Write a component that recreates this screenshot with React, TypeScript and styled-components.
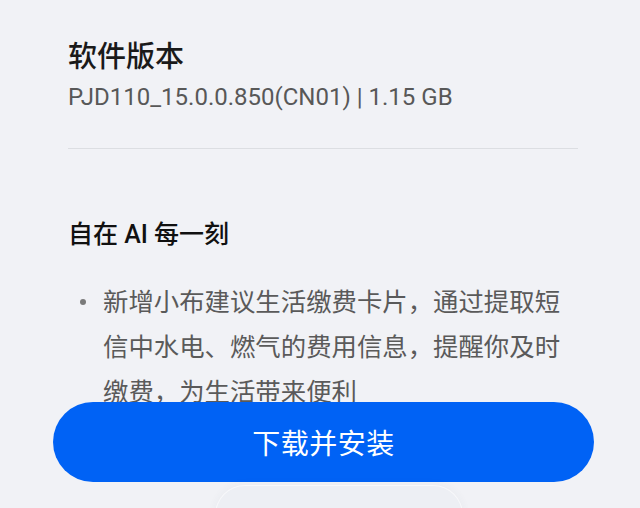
import React from "react";
import styled, { createGlobalStyle } from "styled-components";

const GlobalStyle = createGlobalStyle`
  html, body {
    margin: 0;
    padding: 0;
    background: #f1f2f6;
    overflow: hidden;
  }
  body {
    font-family: Roboto, "Noto Sans CJK SC", sans-serif;
    -webkit-font-smoothing: antialiased;
  }
`;

const Screen = styled.div`
  width: 640px;
  height: 508px;
  display: flex;
  flex-direction: column;
  background: #f1f2f6;
  overflow: hidden;
`;

const ScrollArea = styled.div`
  height: 402px;
  flex: none;
  overflow: hidden;
  padding: 34px 62px 0 68px;
  box-sizing: border-box;
`;

const Title = styled.h1`
  margin: 0;
  font-family: "Noto Sans CJK SC", sans-serif;
  font-size: 29px;
  line-height: 40px;
  font-weight: 500;
  color: #1a1a1a;
`;

const Version = styled.div`
  margin-top: 7px;
  font-family: Roboto, "Noto Sans CJK SC", sans-serif;
  font-size: 24px;
  line-height: 32px;
  color: #585858;
`;

const Divider = styled.hr`
  margin: 35px 0 0 0;
  border: none;
  height: 1px;
  background: #dcdee2;
`;

const SectionHeading = styled.h2`
  margin: 69px 0 0 0;
  font-family: Roboto, "Noto Sans CJK SC", sans-serif;
  font-size: 25px;
  line-height: 34px;
  font-weight: 500;
  color: #111;
`;

const List = styled.ul`
  list-style: none;
  margin: 26px 0 0 0;
  padding: 0;
`;

const Item = styled.li`
  display: flex;
  align-items: flex-start;
`;

const Marker = styled.span`
  flex: none;
  width: 35px;
  height: 45px;
  display: flex;
  align-items: center;
`;

const Dot = styled.span`
  width: 6px;
  height: 6px;
  margin-left: 12px;
  margin-top: 3px;
  border-radius: 50%;
  background: #7a7a7a;
`;

const ItemText = styled.span`
  font-family: "Noto Sans CJK SC", sans-serif;
  font-size: 25.4px;
  line-height: 45px;
  color: #5a5a5a;
`;

const Footer = styled.div`
  display: flex;
  flex-direction: column;
  align-items: center;
`;

const PrimaryButton = styled.button`
  align-self: stretch;
  margin: 0 46px 0 53px;
  height: 80px;
  border: none;
  border-radius: 40px;
  background: #0062f5;
  color: #fff;
  font-family: "Noto Sans CJK SC", sans-serif;
  font-size: 28px;
  font-weight: 400;
  letter-spacing: 0.5px;
  cursor: pointer;
`;

const GhostPill = styled.div`
  margin-top: 3px;
  margin-left: 38px;
  width: 248px;
  height: 60px;
  border-radius: 30px;
  background: #edeff4;
  border: 1px solid rgba(255, 255, 255, 0.6);
  box-shadow: 0 0 10px rgba(60, 70, 90, 0.05);
  box-sizing: border-box;
`;

export default function App() {
  return (
    <>
      <GlobalStyle />
      <Screen>
        <ScrollArea>
          <Title>软件版本</Title>
          <Version>PJD110_15.0.0.850(CN01) | 1.15 GB</Version>
          <Divider />
          <SectionHeading>自在 AI 每一刻</SectionHeading>
          <List>
            <Item>
              <Marker>
                <Dot />
              </Marker>
              <ItemText>
                新增小布建议生活缴费卡片，通过提取短信中水电、燃气的费用信息，提醒你及时缴费，为生活带来便利
              </ItemText>
            </Item>
          </List>
        </ScrollArea>
        <Footer>
          <PrimaryButton>下载并安装</PrimaryButton>
          <GhostPill />
        </Footer>
      </Screen>
    </>
  );
}
